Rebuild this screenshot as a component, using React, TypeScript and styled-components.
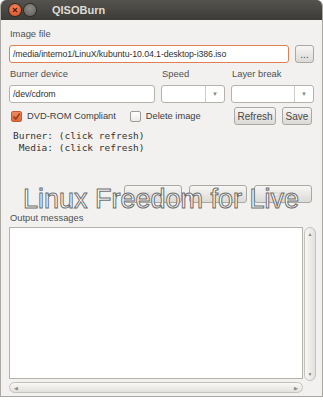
import React from "react";
import styled, { createGlobalStyle } from "styled-components";

const GlobalStyle = createGlobalStyle`
  * { box-sizing: border-box; }
  body {
    margin: 0;
    background: #ffffff;
    font-family: "Liberation Sans", Arial, sans-serif;
  }
`;

const Window = styled.div`
  position: relative;
  width: 323px;
  height: 397px;
  display: flex;
  flex-direction: column;
  background: #f2f1f0;
  border: 1px solid #a9a7a2;
  border-top: none;
  border-radius: 6px 6px 0 0;
  overflow: hidden;
`;

const TitleBar = styled.div`
  height: 20px;
  flex-shrink: 0;
  display: flex;
  align-items: center;
  padding-left: 8px;
  gap: 3px;
  background: linear-gradient(#55534e, #3c3b37);
`;

const WinButton = styled.div<{ $close?: boolean }>`
  width: 12px;
  height: 12px;
  border-radius: 50%;
  display: flex;
  align-items: center;
  justify-content: center;
  background: ${(p) =>
    p.$close
      ? "radial-gradient(circle at 50% 35%, #f7875b, #d94a1c)"
      : "radial-gradient(circle at 50% 35%, #8d8b85, #5f5d58)"};
  box-shadow: 0 0 0 1px #2e2d2a;
`;

const Title = styled.span`
  margin-left: 13px;
  color: #dfdbd2;
  font-size: 11px;
  font-weight: bold;
`;

const Body = styled.div`
  flex: 1;
  display: flex;
  flex-direction: column;
  padding: 7px 8px 0 8px;
`;

const Label = styled.div`
  height: 14px;
  line-height: 14px;
  font-size: 9.4px;
  color: #505050;
  padding-left: 1px;
`;

const FieldRow = styled.div`
  display: flex;
  gap: 6px;
  margin-top: 4px;
`;

const TextInput = styled.div<{ $focus?: boolean }>`
  flex: 1;
  height: 18px;
  line-height: 16px;
  padding-left: 3px;
  font-size: 8.8px;
  letter-spacing: -0.1px;
  color: #303030;
  background: #ffffff;
  border: 1px solid ${(p) => (p.$focus ? "#e0804f" : "#b5b2ac")};
  border-radius: 3px;
  white-space: nowrap;
  overflow: hidden;
`;

const Button = styled.div<{ $w: number }>`
  width: ${(p) => p.$w}px;
  height: 18px;
  display: flex;
  align-items: center;
  justify-content: center;
  font-size: 10px;
  color: #4a4a4a;
  border: 1px solid #aaa8a2;
  border-radius: 3px;
  background: linear-gradient(#f7f6f5, #dcdad6);
`;

const Grid = styled.div`
  display: grid;
  grid-template-columns: 146px 64px 1fr;
  column-gap: 6px;
  margin-top: 3px;
`;

const GridLabel = styled(Label)`
  margin-top: 1px;
  margin-bottom: 4px;
`;

const Combo = styled.div`
  height: 18px;
  display: flex;
  background: #ffffff;
  border: 1px solid #b5b2ac;
  border-radius: 3px;
`;

const ComboArrow = styled.div`
  width: 19px;
  margin-left: auto;
  border-left: 1px solid #cfcdc8;
  display: flex;
  align-items: center;
  justify-content: center;
  color: #8a8883;
  font-size: 6px;
`;

const CheckRow = styled.div`
  display: flex;
  align-items: center;
  height: 22px;
  margin-top: 2px;
  padding-left: 2px;
  padding-right: 2px;
  font-size: 9.3px;
  color: #404040;
`;

const CheckBox = styled.div<{ $on?: boolean }>`
  width: 11px;
  height: 11px;
  border-radius: 2px;
  margin-right: 5px;
  display: flex;
  align-items: center;
  justify-content: center;
  border: 1px solid ${(p) => (p.$on ? "#c55a33" : "#9e9c97")};
  background: ${(p) => (p.$on ? "linear-gradient(#f08a5d, #dc6a3e)" : "linear-gradient(#ffffff, #ecebe9)")};
`;

const CheckText = styled.span<{ $gap?: number }>`
  margin-right: ${(p) => p.$gap || 0}px;
`;

const RowButtons = styled.div`
  margin-left: auto;
  display: flex;
  gap: 6px;
`;

const Mono = styled.pre`
  margin: 3px 0 0 4px;
  font-family: "DejaVu Sans Mono", monospace;
  font-size: 9.5px;
  line-height: 12px;
  color: #333333;
`;

const ActionRow = styled.div`
  display: flex;
  justify-content: flex-end;
  gap: 7px;
  margin-top: 31px;
  padding-right: 2px;
`;

const FadedButton = styled(Button)`
  color: #d4d2ce;
  font-size: 8px;
`;

const OutputLabel = styled(Label)`
  margin-top: 8px;
`;

const OutputArea = styled.div`
  display: grid;
  grid-template-columns: 294px 13px;
  grid-template-rows: 152px 14px;
  margin-top: 2px;
`;

const TextArea = styled.div`
  grid-column: 1;
  grid-row: 1;
  background: #ffffff;
  border: 1px solid #b5b2ac;
`;

const VScroll = styled.div`
  grid-column: 2;
  grid-row: 1;
  margin-left: 1px;
  height: 154px;
  border-radius: 6px;
  border: 1px solid #c4c2bd;
  background: linear-gradient(90deg, #f8f8f7, #e3e1dd);
  display: flex;
  flex-direction: column;
  justify-content: space-between;
  align-items: center;
  padding: 3px 0;
  font-size: 5px;
  color: #8a8883;
`;

const HScroll = styled.div`
  grid-column: 1;
  grid-row: 2;
  margin-top: 3px;
  height: 11px;
  border-radius: 6px;
  border: 1px solid #c4c2bd;
  background: linear-gradient(#f8f8f7, #e3e1dd);
  display: flex;
  justify-content: space-between;
  align-items: center;
  padding: 0 4px;
  font-size: 5px;
  color: #8a8883;
`;

const Watermark = styled.div`
  position: absolute;
  left: 22px;
  top: 184px;
  font-family: "Liberation Sans", Arial, sans-serif;
  font-size: 27px;
  color: #ffffff;
  -webkit-text-stroke: 1px #6e6e6e;
  white-space: nowrap;
`;

const Check = () => (
  <svg width="9" height="9" viewBox="0 0 9 9">
    <path d="M1.5 4.5 L3.8 7 L7.8 1.5" fill="none" stroke="#9c3a18" strokeWidth="1.6" />
  </svg>
);

const Cross = () => (
  <svg width="6" height="6" viewBox="0 0 6 6">
    <path d="M1 1 L5 5 M5 1 L1 5" stroke="#4a1a08" strokeWidth="1.2" />
  </svg>
);

export default function App() {
  return (
    <>
      <GlobalStyle />
      <Window>
        <TitleBar>
          <WinButton $close>
            <Cross />
          </WinButton>
          <WinButton />
          <Title>QISOBurn</Title>
        </TitleBar>
        <Body>
          <Label>Image file</Label>
          <FieldRow>
            <TextInput $focus>/media/interno1/LinuX/kubuntu-10.04.1-desktop-i386.iso</TextInput>
            <Button $w={19}>...</Button>
          </FieldRow>

          <Grid>
            <GridLabel>Burner device</GridLabel>
            <GridLabel>Speed</GridLabel>
            <GridLabel>Layer break</GridLabel>
            <TextInput>/dev/cdrom</TextInput>
            <Combo>
              <ComboArrow>▼</ComboArrow>
            </Combo>
            <Combo>
              <ComboArrow>▼</ComboArrow>
            </Combo>
          </Grid>

          <CheckRow>
            <CheckBox $on>
              <Check />
            </CheckBox>
            <CheckText $gap={14}>DVD-ROM Compliant</CheckText>
            <CheckBox />
            <CheckText>Delete image</CheckText>
            <RowButtons>
              <Button $w={42}>Refresh</Button>
              <Button $w={30}>Save</Button>
            </RowButtons>
          </CheckRow>

          <Mono>{"Burner: (click refresh)\n Media: (click refresh)"}</Mono>

          <ActionRow>
            <FadedButton $w={58}>Burn</FadedButton>
            <FadedButton $w={58}>Stop</FadedButton>
            <FadedButton $w={58}>Close</FadedButton>
          </ActionRow>

          <OutputLabel>Output messages</OutputLabel>
          <OutputArea>
            <TextArea />
            <VScroll>
              <span>▲</span>
              <span>▼</span>
            </VScroll>
            <HScroll>
              <span>◀</span>
              <span>▶</span>
            </HScroll>
          </OutputArea>
        </Body>
        <Watermark>Linux Freedom for Live</Watermark>
      </Window>
    </>
  );
}
